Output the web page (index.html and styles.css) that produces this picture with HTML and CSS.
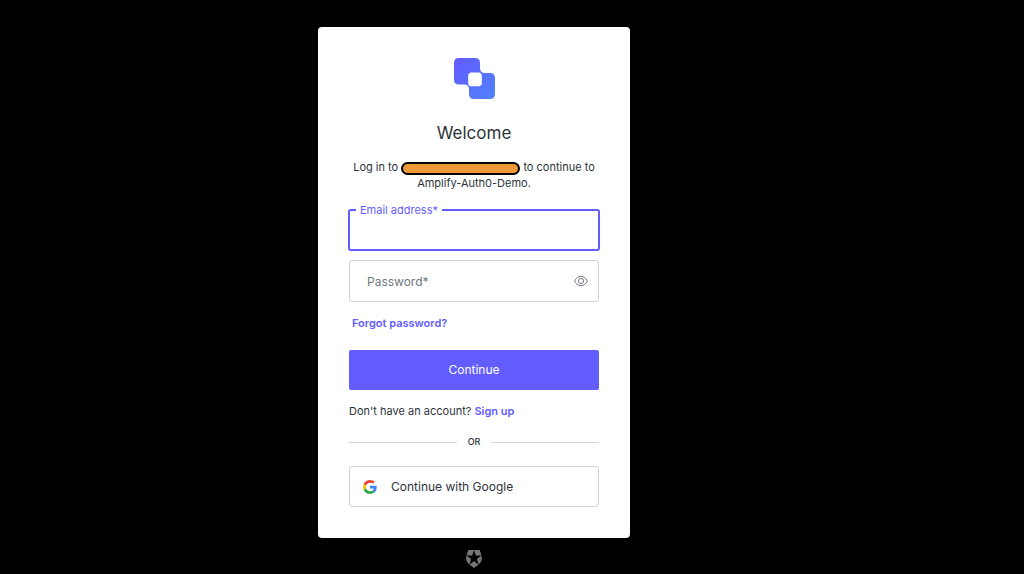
FILE: index.html
```html
<!DOCTYPE html>
<html lang="en">
<head>
<meta charset="utf-8">
<meta name="viewport" content="width=device-width, initial-scale=1">
<title>Log in | Amplify-Auth0-Demo</title>
<link rel="stylesheet" href="styles.css">
</head>
<body>
<main class="page">
  <section class="card">
    <header class="card-header">
      <svg class="logo" viewBox="0 0 41 41" aria-hidden="true">
        <defs>
          <linearGradient id="brand" x1="0" y1="0" x2="1" y2="1">
            <stop offset="0.1" stop-color="#635dff"/>
            <stop offset="1" stop-color="#4f83f9"/>
          </linearGradient>
        </defs>
        <path fill="url(#brand)" fill-rule="evenodd" d="M5 0H21Q26 0 26 5V10Q26 15 31 15H36Q41 15 41 20V36Q41 41 36 41H20Q15 41 15 36V31Q15 26.500 10 26.500H5Q0 26.500 0 21.500V5Q0 0 5 0ZM17.500 14.500Q14.200 14.500 14.200 18V25Q14.200 28.300 17.500 28.300H24.500Q27.800 28.300 27.800 25V18Q27.800 14.500 24.500 14.500Z"/>
      </svg>
      <h1 class="title">Welcome</h1>
      <p class="intro">Log in to <span class="redacted"></span> to continue to Amplify-Auth0-Demo.</p>
    </header>
    <form class="form">
      <div class="field field-active">
        <label class="float-label" for="email">Email address*</label>
        <input class="input" id="email" type="email">
      </div>
      <div class="field">
        <input class="input" id="password" type="password" placeholder="Password*" aria-label="Password">
        <button class="reveal" type="button" aria-label="Show password">
          <svg class="eye" viewBox="0 0 14 12" aria-hidden="true">
            <path d="M.6 6C2 3.200 4.200 1.300 7 1.300S12 3.200 13.400 6C12 8.800 9.800 10.700 7 10.700S2 8.800 .6 6Z"/>
            <circle cx="7" cy="6" r="2.500"/>
          </svg>
        </button>
      </div>
      <a class="link forgot" href="#">Forgot password?</a>
      <button class="submit" type="submit">Continue</button>
    </form>
    <p class="signup">Don't have an account? <a class="link" href="#">Sign up</a></p>
    <div class="divider"><span>OR</span></div>
    <button class="google" type="button">
      <svg class="google-icon" viewBox="0 0 48 48" aria-hidden="true">
        <path fill="#ea4335" d="M24 9.500c3.540 0 6.710 1.220 9.210 3.600l6.850-6.850C35.900 2.380 30.470 0 24 0 14.620 0 6.510 5.380 2.560 13.220l7.980 6.190C12.430 13.720 17.740 9.500 24 9.500z"/>
        <path fill="#4285f4" d="M46.980 24.550c0-1.570-.15-3.090-.38-4.550H24v9.020h12.940c-.58 2.960-2.260 5.480-4.780 7.180l7.730 6c4.510-4.180 7.090-10.360 7.090-17.650z"/>
        <path fill="#fbbc05" d="M10.530 28.590c-.48-1.450-.76-2.990-.76-4.590s.27-3.140.76-4.590l-7.980-6.190C.92 16.460 0 20.120 0 24s.92 7.540 2.560 10.780l7.970-6.190z"/>
        <path fill="#34a853" d="M24 48c6.480 0 11.930-2.130 15.890-5.810l-7.730-6c-2.150 1.450-4.920 2.300-8.160 2.300-6.260 0-11.570-4.220-13.470-9.910l-7.980 6.190C6.510 42.620 14.620 48 24 48z"/>
      </svg>
      <span>Continue with Google</span>
    </button>
  </section>
  <footer class="footer">
    <svg class="badge" viewBox="0 0 24 24" aria-hidden="true">
      <path fill="#757575" d="M21.980 7.448L19.620 0H4.347L2.020 7.448c-1.352 4.312.03 9.206 3.815 12.015L12.007 24l6.157-4.552c3.755-2.810 5.182-7.688 3.815-12.015l-6.160 4.580 2.343 7.450-6.157-4.597-6.158 4.580 2.358-7.433-6.188-4.550 7.630-.045L12.008 0l2.356 7.404 7.615.044z"/>
    </svg>
  </footer>
</main>
</body>
</html>
```
FILE: styles.css
```css
* {
  box-sizing: border-box;
}

body {
  margin: 0;
  background: #000;
  color: #2d333a;
  font-family: Inter, "Liberation Sans", sans-serif;
  font-size: 11px;
  line-height: 16px;
}

button,
input {
  font: inherit;
}

.page {
  display: flex;
  flex-direction: column;
  align-items: center;
  padding: 27px 76px 0 0;
}

.card {
  width: 100%;
  max-width: 312px;
  padding: 31px;
  border-radius: 4px;
  background: #fff;
}

.card-header {
  display: flex;
  flex-direction: column;
  align-items: center;
  text-align: center;
}

.logo {
  width: 41px;
  height: 41px;
}

.title {
  margin: 22px 0 14px;
  font-size: 17px;
  font-weight: 400;
  line-height: 24px;
}

.intro {
  margin: 0;
}

.redacted {
  display: inline-block;
  width: 119px;
  height: 13px;
  border: 2px solid #000;
  border-radius: 7px;
  background: #ee9838;
  vertical-align: middle;
}

.form {
  display: flex;
  flex-direction: column;
  margin-top: 18px;
}

.field {
  position: relative;
  display: flex;
  align-items: center;
  height: 42px;
  margin-bottom: 9px;
  border: 1px solid #d0d2d5;
  border-radius: 3px;
}

.field-active {
  margin-right: -1px;
  margin-left: -1px;
  border: 2px solid #635dff;
}

.float-label {
  position: absolute;
  top: -9px;
  left: 6px;
  padding: 0 4px;
  background: #fff;
  color: #635dff;
}

.input {
  flex: 1;
  min-width: 0;
  height: 100%;
  padding: 0 17px;
  border: 0;
  outline: 0;
  background: none;
  color: #2d333a;
  font-size: 12px;
}

.input::placeholder {
  color: #6f7780;
  opacity: 1;
}

.reveal {
  display: flex;
  padding: 0;
  margin-right: 10px;
  border: 0;
  background: none;
}

.eye {
  width: 14px;
  height: 12px;
  fill: none;
  stroke: #6f7780;
}

.link {
  color: #635dff;
  font-weight: 600;
  text-decoration: none;
}

.forgot {
  align-self: flex-start;
  margin: 4px 3px 19px;
}

.submit {
  height: 40px;
  border: 0;
  border-radius: 2px;
  background: #635dff;
  color: #fff;
  font-size: 12px;
}

.signup {
  margin: 13px 0 0;
}

.divider {
  display: flex;
  align-items: center;
  gap: 11px;
  margin: 15px 0 16px;
  font-size: 9px;
  font-weight: 500;
}

.divider::before,
.divider::after {
  flex: 1;
  height: 1px;
  background: #d0d2d5;
  content: "";
}

.google {
  display: flex;
  align-items: center;
  gap: 14px;
  width: 100%;
  height: 41px;
  padding: 0 13px;
  border: 1px solid #d0d2d5;
  border-radius: 3px;
  background: #fff;
  color: #2d333a;
  font-size: 12px;
}

.google-icon {
  width: 14px;
  height: 14px;
}

.footer {
  display: flex;
  margin-top: 12px;
}

.badge {
  width: 18px;
  height: 18px;
}
```
